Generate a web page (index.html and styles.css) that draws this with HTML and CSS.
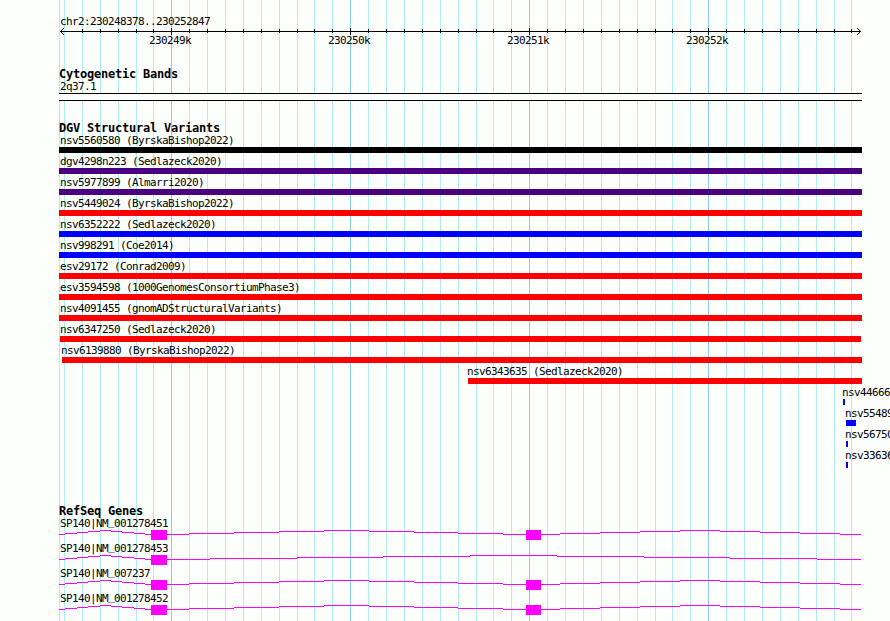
FILE: index.html
```html
<!DOCTYPE html>
<html lang="en">
<head>
<meta charset="UTF-8">
<meta name="viewport" content="width=device-width, initial-scale=1.0">
<title>chr2:230248378..230252847</title>
<link rel="stylesheet" href="styles.css">
</head>
<body>

<div class="browser">
  <svg class="grid" width="890" height="621">
    <path class="minor" d="M59.5 0V621M64.5 0V621M82.5 0V621M100.5 0V621M118.5 0V621M136.5 0V621M153.5 0V621M189.5 0V621M207.5 0V621M225.5 0V621M243.5 0V621M261.5 0V621M279.5 0V621M297.5 0V621M314.5 0V621M332.5 0V621M368.5 0V621M386.5 0V621M404.5 0V621M422.5 0V621M440.5 0V621M458.5 0V621M476.5 0V621M493.5 0V621M511.5 0V621M547.5 0V621M565.5 0V621M583.5 0V621M601.5 0V621M619.5 0V621M637.5 0V621M655.5 0V621M672.5 0V621M690.5 0V621M726.5 0V621M744.5 0V621M762.5 0V621M780.5 0V621M798.5 0V621M816.5 0V621M834.5 0V621M851.5 0V621"/>
    <path class="major" d="M171.5 0V621M350.5 0V621M529.5 0V621M708.5 0V621"/>
  </svg>

  <div class="track scale">
    <div class="label">chr2:230248378..230252847</div>
    <svg class="ruler" width="890" height="20" viewBox="0 28 890 20">
      <path class="axis" d="M60 31.5H861M82.5 29V33M100.5 29V33M118.5 29V33M136.5 29V33M153.5 29V33M189.5 29V33M207.5 29V33M225.5 29V33M243.5 29V33M261.5 29V33M279.5 29V33M297.5 29V33M314.5 29V33M332.5 29V33M368.5 29V33M386.5 29V33M404.5 29V33M422.5 29V33M440.5 29V33M458.5 29V33M476.5 29V33M493.5 29V33M511.5 29V33M547.5 29V33M565.5 29V33M583.5 29V33M601.5 29V33M619.5 29V33M637.5 29V33M655.5 29V33M672.5 29V33M690.5 29V33M726.5 29V33M744.5 29V33M762.5 29V33M780.5 29V33M798.5 29V33M816.5 29V33M834.5 29V33M851.5 29V33"/>
      <path class="axis" d="M171.5 28V35M350.5 28V35M529.5 28V35M708.5 28V35"/>
      <path class="axis" d="M64 28.5H63M63 29.5H62M62 30.5H61M62 32.5H61M63 33.5H62M64 34.5H63M857 28.5H858M858 29.5H859M859 30.5H860M859 32.5H860M858 33.5H859M857 34.5H858"/>
      <text x="149" y="44">230249k</text>
      <text x="328" y="44">230250k</text>
      <text x="507" y="44">230251k</text>
      <text x="686" y="44">230252k</text>
    </svg>
  </div>

  <div class="track cytoband">
    <h2>Cytogenetic Bands</h2>
    <div class="label">2q37.1</div>
    <div class="band"></div>
  </div>

  <div class="track variants">
    <h2>DGV Structural Variants</h2>
    <div class="feature"><div class="label">nsv5560580 (ByrskaBishop2022)</div><div class="bar complex"></div></div>
    <div class="feature"><div class="label">dgv4298n223 (Sedlazeck2020)</div><div class="bar mixed"></div></div>
    <div class="feature"><div class="label">nsv5977899 (Almarri2020)</div><div class="bar mixed"></div></div>
    <div class="feature"><div class="label">nsv5449024 (ByrskaBishop2022)</div><div class="bar loss"></div></div>
    <div class="feature"><div class="label">nsv6352222 (Sedlazeck2020)</div><div class="bar gain"></div></div>
    <div class="feature"><div class="label">nsv998291 (Coe2014)</div><div class="bar gain"></div></div>
    <div class="feature"><div class="label">esv29172 (Conrad2009)</div><div class="bar loss"></div></div>
    <div class="feature"><div class="label">esv3594598 (1000GenomesConsortiumPhase3)</div><div class="bar loss"></div></div>
    <div class="feature"><div class="label">nsv4091455 (gnomADStructuralVariants)</div><div class="bar loss"></div></div>
    <div class="feature" style="margin-left: 1px;"><div class="label flush">nsv6347250 (Sedlazeck2020)</div><div class="bar loss" style="width: 801px;"></div></div>
    <div class="feature" style="margin-left: 3px;"><div class="label flush back">nsv6139880 (ByrskaBishop2022)</div><div class="bar loss" style="width: 800px;"></div></div>
    <div class="feature" style="margin-left: 409px;"><div class="label flush back">nsv6343635 (Sedlazeck2020)</div><div class="bar loss" style="width: 394px;"></div></div>
    <div class="feature" style="margin-left: 784px;"><div class="label flush back">nsv44666</div><div class="bar gain" style="width: 2px;"></div></div>
    <div class="feature" style="margin-left: 787px;"><div class="label flush back">nsv55489</div><div class="bar gain" style="width: 10px;"></div></div>
    <div class="feature" style="margin-left: 787px;"><div class="label flush back">nsv56750</div><div class="bar gain" style="width: 2px;"></div></div>
    <div class="feature" style="margin-left: 787px;"><div class="label flush back">nsv33636</div><div class="bar gain" style="width: 2px;"></div></div>
  </div>

  <div class="track genes">
    <h2>RefSeq Genes</h2>
    <div class="gene">
      <div class="label">SP140|NM<span class="low">_</span>001278451</div>
      <svg class="transcript" width="803" height="10" viewBox="59 0 803 10">
        <g id="two-exons">
          <path class="intron" d="M59 4.5H65M65 3.5H77M77 2.5H88M88 1.5H100M100 .5H111M111 1.5H122M122 2.5H134M134 3.5H145M145 4.5H151"/>
          <path class="intron" d="M167 4.5H189M189 3.5H234M234 2.5H279M279 1.5H324M324 .5H369M369 1.5H414M414 2.5H458M458 3.5H503M503 4.5H526"/>
          <path class="intron" d="M541 4.5H560M560 3.5H600M600 2.5H640M640 1.5H680M680 .5H720M720 1.5H760M760 2.5H800M800 3.5H840M840 4.5H861"/>
          <rect class="exon" x="151" y="0" width="16" height="10"/>
          <rect class="exon" x="526" y="0" width="15" height="10"/>
        </g>
      </svg>
    </div>
    <div class="gene">
      <div class="label">SP140|NM<span class="low">_</span>001278453</div>
      <svg class="transcript" width="803" height="10" viewBox="59 0 803 10">
        <path class="intron" d="M59 4.5H65M65 3.5H77M77 2.5H88M88 1.5H100M100 .5H111M111 1.5H122M122 2.5H134M134 3.5H145M145 4.5H151"/>
        <path class="intron" d="M167 4.5H210M210 3.5H297M297 2.5H383M383 1.5H470M470 .5H557M557 1.5H644M644 2.5H730M730 3.5H817M817 4.5H861"/>
        <rect class="exon" x="151" y="0" width="16" height="10"/>
      </svg>
    </div>
    <div class="gene">
      <div class="label">SP140|NM<span class="low">_</span>007237</div>
      <svg class="transcript" width="803" height="10" viewBox="59 0 803 10"><use href="#two-exons"/></svg>
    </div>
    <div class="gene">
      <div class="label">SP140|NM<span class="low">_</span>001278452</div>
      <svg class="transcript" width="803" height="10" viewBox="59 0 803 10"><use href="#two-exons"/></svg>
    </div>
  </div>
</div>

</body>
</html>
```
FILE: styles.css
```css
body {
  margin: 0;
  background-color: #fdfffc;
  color: #000;
  font-family: "DejaVu Sans Mono", monospace;
  font-size: 11px;
  line-height: 13px;
  letter-spacing: -0.622px;
}
.browser {
  position: relative;
  width: 890px;
  height: 621px;
  overflow: hidden;
}
svg {
  display: block;
  shape-rendering: crispEdges;
}

/* guide lines run behind every track */
.grid {
  position: absolute;
  top: 0;
  left: 0;
  z-index: -1;
}
.minor {
  stroke: #afeeee;
}
.major {
  stroke: #87ceeb;
}

.track {
  padding-left: 59px;
}
.track h2 {
  margin: 0;
  height: 12px;
  font-size: 12px;
  line-height: 12px;
  font-weight: bold;
  letter-spacing: -0.224px;
}
.label {
  height: 13px;
  padding-left: 1px;
  white-space: nowrap;
}
.flush {
  padding-left: 0;
}
.back {
  margin-left: -1px;
}
/* keeps the underscore clear of the intron line */
.low {
  line-height: 0;
  vertical-align: 2px;
}

.scale {
  padding-top: 15px;
}
.ruler {
  margin-left: -59px;
}
.axis {
  stroke: #000;
}

.cytoband {
  padding-top: 20px;
}
.band {
  width: 803px;
  height: 6px;
  border-top: 1px solid #000;
  border-bottom: 1px solid #000;
  background-color: #fdfffc;
}

.variants {
  padding-top: 21px;
}
.feature {
  height: 21px;
}
.bar {
  width: 803px;
  height: 6px;
}
.complex {
  background-color: #000;
}
.mixed {
  background-color: #4b0082;
}
.loss {
  background-color: #f00;
}
.gain {
  background-color: #00f;
}

.genes {
  padding-top: 35px;
}
.gene {
  height: 25px;
}
.intron {
  stroke: #f0f;
}
.exon {
  fill: #f0f;
}
```
